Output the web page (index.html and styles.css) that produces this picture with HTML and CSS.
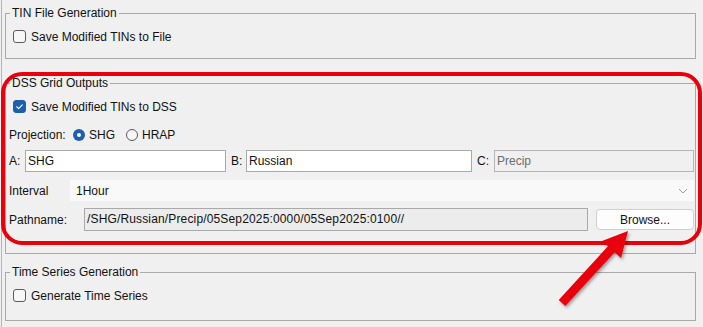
FILE: index.html
```html
<!DOCTYPE html>
<html>
<head>
<meta charset="utf-8">
<link rel="stylesheet" href="styles.css">
</head>
<body>
<div class="page">
  <fieldset class="group g-tin">
    <legend>TIN File Generation</legend>
    <label class="check-row first">
      <span class="cb"></span><span>Save Modified TINs to File</span>
    </label>
  </fieldset>

  <fieldset class="group g-dss">
    <legend>DSS Grid Outputs</legend>
    <label class="check-row first">
      <span class="cb checked"><svg width="13" height="13" viewBox="0 0 13 13"><path d="M3.3 6.8 L5.5 9 L9.8 4.5" fill="none" stroke="#fff" stroke-width="1.3" stroke-linecap="round" stroke-linejoin="round"/></svg></span><span>Save Modified TINs to DSS</span>
    </label>
    <div class="row proj-row">
      <span class="lbl-proj">Projection:</span>
      <span class="radio on"></span><span class="rlabel">SHG</span>
      <span class="radio off"></span><span class="rlabel">HRAP</span>
    </div>
    <div class="row abc-row">
      <span class="lbl-a">A:</span>
      <div class="field f-a">SHG</div>
      <span class="lbl-b">B:</span>
      <div class="field f-b">Russian</div>
      <span class="lbl-c">C:</span>
      <div class="field f-c disabled">Precip</div>
    </div>
    <div class="row interval-row">
      <span class="lbl-int">Interval</span>
      <div class="combo"><span>1Hour</span>
        <svg class="chev" width="10" height="6" viewBox="0 0 10 6"><path d="M1 1 L5 5 L9 1" fill="none" stroke="#9a9a9a" stroke-width="1"/></svg>
      </div>
    </div>
    <div class="row path-row">
      <span class="lbl-path">Pathname:</span>
      <div class="field f-path">/SHG/Russian/Precip/05Sep2025:0000/05Sep2025:0100//</div>
      <button class="btn">Browse...</button>
    </div>
  </fieldset>

  <fieldset class="group g-ts">
    <legend>Time Series Generation</legend>
    <label class="check-row first">
      <span class="cb"></span><span>Generate Time Series</span>
    </label>
  </fieldset>
</div>

<svg class="annot" width="703" height="327" viewBox="0 0 703 327">
  <defs>
    <filter id="sh" x="-20%" y="-20%" width="140%" height="140%">
      <feDropShadow dx="1.5" dy="2" stdDeviation="1.5" flood-color="#000" flood-opacity="0.35"/>
    </filter>
  </defs>
  <rect x="3" y="74" width="697" height="169" rx="19" ry="19" fill="none" stroke="#e8000b" stroke-width="4"/>
  <g filter="url(#sh)" fill="#e8000b">
    <polygon points="558.7,300 608.6,245.6 615.2,251.7 565.3,306"/>
    <polygon points="628,231 602,241 621,258"/>
  </g>
</svg>
</body>
</html>
```
FILE: styles.css
```css
html, body {
  margin: 0;
  padding: 0;
}
body {
  background: #f0f0f0;
  font-family: "Liberation Sans", Arial, sans-serif;
  font-size: 12px;
  color: #111;
  width: 703px;
  height: 327px;
  overflow: hidden;
  position: relative;
}
.page {
  margin-left: 1px;
  border-left: 1px solid #b4b4b4;
  min-height: 327px;
  box-sizing: border-box;
  padding: 6px 7px 0 3px;
}
.group {
  margin: 0;
  padding: 0;
  border: 1px solid #a9a9a9;
  min-width: 0;
}
.group legend {
  margin-left: 4px;
  padding: 0 2px;
  line-height: 14px;
  height: 14px;
}
.g-tin { padding-bottom: 15px; }
.g-dss { margin-top: 17px; padding-bottom: 22px; }
.g-ts { margin-top: 11px; padding-bottom: 18px; }

.check-row {
  display: flex;
  align-items: center;
  height: 13px;
  padding-left: 7px;
  gap: 5px;
}
.check-row.first { margin-top: 10px; }

.cb {
  width: 11px;
  height: 11px;
  border: 1px solid #5a5a5a;
  border-radius: 3px;
  background: #f7f7f7;
  display: inline-flex;
  align-items: center;
  justify-content: center;
}
.cb.checked {
  background: #1b5fae;
  border-color: #1b5fae;
}
.cb svg { display: block; }

.row {
  display: flex;
  align-items: center;
  padding-left: 3px;
}
.proj-row { height: 20px; margin-top: 12px; }
.lbl-proj { width: 64px; }
.radio {
  width: 12px;
  height: 12px;
  box-sizing: border-box;
  border-radius: 50%;
  margin-right: 4px;
}
.radio.on {
  background: #1b5fae;
  position: relative;
}
.radio.on::after {
  content: "";
  position: absolute;
  left: 4px;
  top: 4px;
  width: 4px;
  height: 4px;
  border-radius: 50%;
  background: #fff;
}
.radio.off {
  border: 1px solid #5a5a5a;
  background: #f7f7f7;
}
.rlabel { margin-right: 11px; }

.abc-row { height: 22px; margin-top: 5px; }
.lbl-a { width: 16px; }
.lbl-b { width: 15px; margin-left: 5px; }
.lbl-c { width: 17px; margin-left: 5px; }
.field {
  box-sizing: border-box;
  height: 22px;
  line-height: 20px;
  border: 1px solid #a9a9a9;
  background: #fff;
  padding-left: 2px;
  white-space: nowrap;
  overflow: hidden;
}
.f-a { width: 201px; }
.f-b { width: 226px; }
.f-c { flex: 1; margin-right: 1px; }
.field.disabled {
  background: #f0f0f0;
  color: #6d6d6d;
  border-color: #b4b4b4;
}

.interval-row { height: 21px; margin-top: 8px; }
.lbl-int { width: 61px; }
.combo {
  flex: 1;
  height: 21px;
  margin-right: 1px;
  background: #f9f9f9;
  display: flex;
  align-items: center;
  justify-content: space-between;
  padding: 0 6px 0 6px;
}
.chev { display: block; }

.path-row { height: 23px; margin-top: 7px; }
.lbl-path { width: 75px; }
.f-path {
  width: 504px;
  height: 23px;
  line-height: 21px;
  background: #ececec;
  border-color: #a9a9a9;
  letter-spacing: 0.15px;
}
.btn {
  margin-left: 8px;
  width: 98px;
  height: 21px;
  box-sizing: border-box;
  border: 1px solid #cfcfcf;
  border-radius: 4px;
  background: #fdfdfd;
  font-family: "Liberation Sans", Arial, sans-serif;
  font-size: 12px;
  color: #111;
  padding: 0;
}

.annot {
  position: absolute;
  left: 0;
  top: 0;
  pointer-events: none;
}
```
